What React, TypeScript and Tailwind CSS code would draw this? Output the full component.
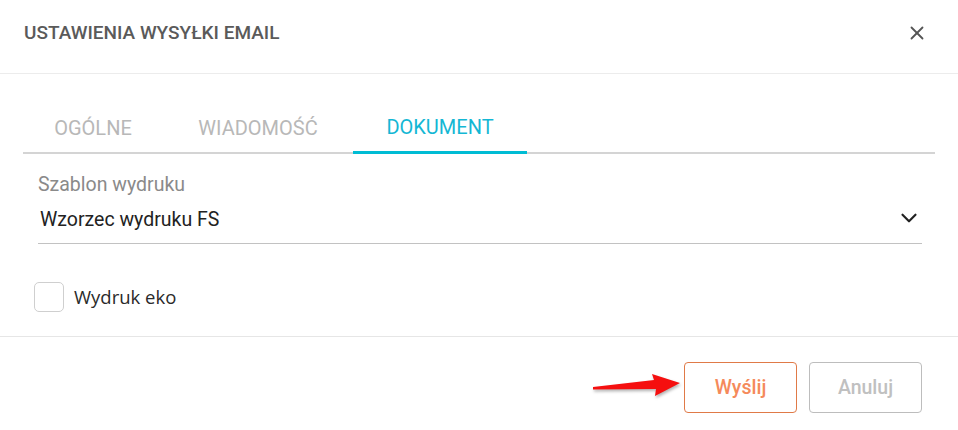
import { ChevronDown, X } from "lucide-react";

const tabs = [
  { label: "OGÓLNE", w: "w-[140px]", active: false },
  { label: "WIADOMOŚĆ", w: "w-[190px]", active: false },
  { label: "DOKUMENT", w: "w-[174px]", active: true },
];

export default function App() {
  return (
    <div className="w-[958px] h-[430px] bg-white flex flex-col font-['Roboto',sans-serif]">
      {/* Header */}
      <div className="h-[74px] flex items-start justify-between pl-6 pr-[30px] pt-[22px] border-b border-[#ececec]">
        <h2 className="text-[19px] leading-[22px] font-medium text-[#5a5a5a]">USTAWIENIA WYSYŁKI EMAIL</h2>
        <X className="w-[22px] h-[22px] text-[#555]" strokeWidth={2} />
      </div>

      {/* Body */}
      <div className="flex flex-col px-[23px] pt-[27px] h-[263px] border-b border-[#e6e6e6]">
        <div className="flex border-b-2 border-[#d4d4d4] h-[53px]">
          {tabs.map((t) => (
            <div
              key={t.label}
              className={`${t.w} flex items-center justify-center pt-[2px] text-[20px] ${
                t.active ? "text-[#14b7d4] border-b-[3px] border-[#00bcd4] -mb-[2px]" : "text-[#b8b8b8]"
              }`}
            >
              {t.label}
            </div>
          ))}
        </div>

        <div className="flex flex-col pl-[15px] pr-[13px] mt-[19px]">
          <span className="text-[19.5px] leading-[24px] text-[#8a8a8a]">Szablon wydruku</span>
          <div className="flex items-center justify-between h-[47px] border-b border-[#c2c2c2]">
            <span className="text-[19.5px] text-[#222] pl-[2px]">Wzorzec wydruku FS</span>
            <ChevronDown className="w-[26px] h-[26px] text-[#222] -mt-[4px]" strokeWidth={2} />
          </div>
        </div>

        <label className="flex items-center gap-[10px] mt-[38px] ml-[11px]">
          <span className="w-[30px] h-[30px] rounded-[5px] border border-[#cfcfcf] bg-white" />
          <span className="text-[18.5px] text-[#2a2a2a] font-['Open_Sans',sans-serif]">Wydruk eko</span>
        </label>
      </div>

      {/* Footer */}
      <div className="flex items-start justify-end pr-[36px] pt-[25px]">
        <svg width="92" height="30" viewBox="0 0 92 30" className="mt-[8px] mr-[2px] drop-shadow-[1px_2px_1.5px_rgba(0,0,0,0.3)]">
          <path d="M3 17 L64 10 L62 4 L90 13 L65 26 L66 19 L3 19.5 Z" fill="#f50f0f" />
        </svg>
        <div className="flex gap-3">
          <button className="w-[113px] h-[51px] rounded-[4px] border border-[#e07a48] text-[#f58a5b] text-[19.5px] font-medium bg-white">
            Wyślij
          </button>
          <button className="w-[113px] h-[51px] rounded-[4px] border border-[#bdbdbd] text-[#c0c0c0] text-[19.5px] font-medium bg-white">
            Anuluj
          </button>
        </div>
      </div>
    </div>
  );
}
